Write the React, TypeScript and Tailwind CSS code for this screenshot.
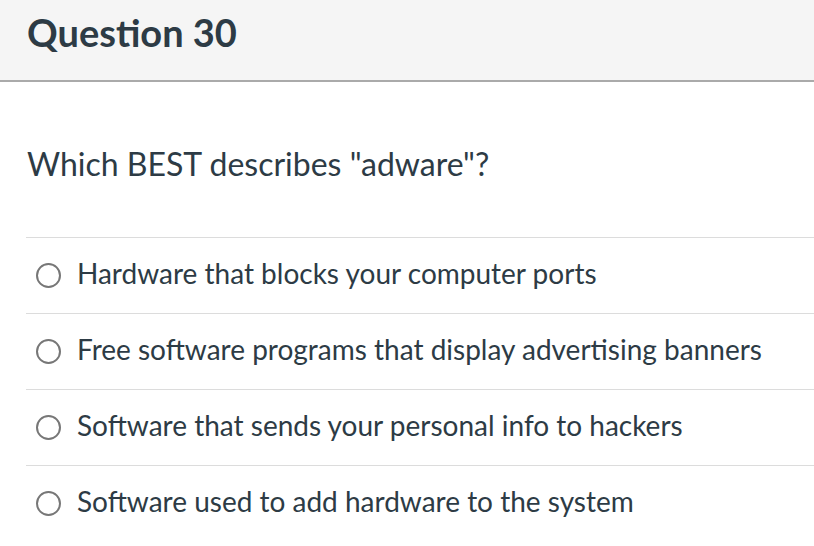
const options = [
  "Hardware that blocks your computer ports",
  "Free software programs that display advertising banners",
  "Software that sends your personal info to hackers",
  "Software used to add hardware to the system",
];

export default function App() {
  return (
    <div className="min-h-[546px] w-[814px] bg-white text-[#2d3b45] font-['Lato','Liberation_Sans',sans-serif]">
      <div className="h-[82px] border-b-2 border-[#aaaaaa] bg-[#f5f5f5] px-[27px] pt-[10px]">
        <h2 className="text-[38px] font-bold leading-[1.2]">Question 30</h2>
      </div>
      <div className="pl-[27px] pt-[63px] text-[32px] leading-[1.2]">Which BEST describes "adware"?</div>
      <div className="ml-[26px] mt-[54px]">
        {options.map((o) => (
          <label key={o} className="flex h-[76px] items-center border-t border-[#dcdcdc]">
            <span className="ml-[10px] h-[25px] w-[25px] shrink-0 rounded-full border-2 border-[#777777] bg-white" />
            <span className="mb-[5px] ml-[16px] text-[28px] leading-[1.2]">{o}</span>
          </label>
        ))}
      </div>
    </div>
  );
}
